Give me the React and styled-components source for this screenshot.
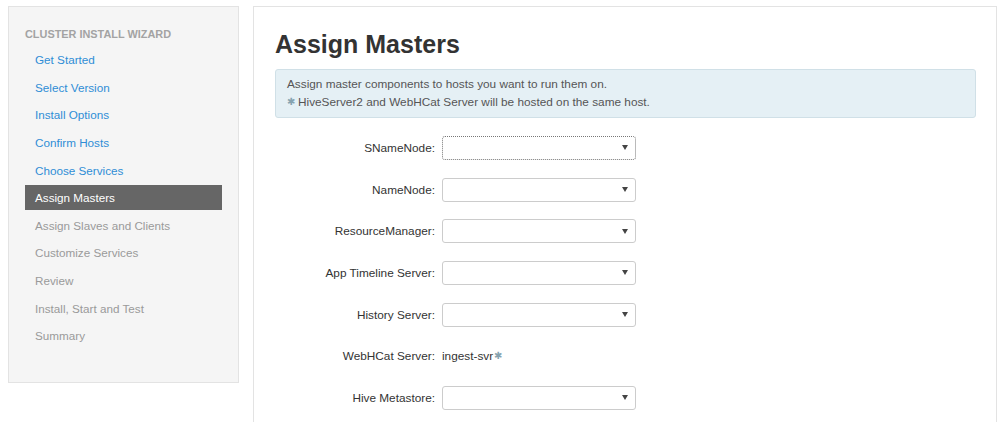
import styled, { createGlobalStyle } from "styled-components";

const Global = createGlobalStyle`
  html, body {
    margin: 0;
    background: #fff;
    font-family: "Liberation Sans", Arial, sans-serif;
    overflow: hidden;
  }
  body {
    padding: 6px 0 0 8px;
  }
`;

const Page = styled.div`
  display: flex;
  align-items: flex-start;
  gap: 14px;
  height: 416px;
`;

const Sidebar = styled.div`
  width: 231px;
  background: #f5f5f5;
  border: 1px solid #e3e3e3;
  padding: 20px 16px 34px 16px;
  box-sizing: border-box;
`;

const SideTitle = styled.div`
  font-size: 10.9px;
  font-weight: bold;
  color: #a3a3a3;
  text-transform: uppercase;
  line-height: 14px;
  margin-bottom: 6px;
`;

const NavList = styled.ul`
  list-style: none;
  margin: 0;
  padding: 0;
  display: flex;
  flex-direction: column;
  gap: 2.65px;
`;

const NavItem = styled.li`
  height: 25px;
  line-height: 25px;
  padding-left: 10px;
  font-size: 11.7px;
  color: ${(p) => (p.$state === "done" ? "#2f8dd5" : p.$state === "active" ? "#fff" : "#9a9a9a")};
  background: ${(p) => (p.$state === "active" ? "#666" : "transparent")};
  white-space: nowrap;
`;

const Main = styled.div`
  flex: 1;
  margin-right: 2px;
  height: 420px;
  background: #fff;
  border: 1px solid #e3e3e3;
  border-bottom: none;
  padding: 0 20px 0 21px;
  box-sizing: border-box;
`;

const Title = styled.h1`
  margin: 23px 0 11px 0;
  font-size: 25px;
  line-height: 28px;
  font-weight: bold;
  color: #333;
`;

const Alert = styled.div`
  background: #e5f0f5;
  border: 1px solid #d0e0e7;
  border-radius: 3px;
  padding: 6px 11px 6px 11px;
  font-size: 11.8px;
  line-height: 17px;
  color: #555;
`;

const Star = styled.span`
  color: #86a3b0;
  font-size: 10px;
  margin-right: 3px;
  vertical-align: 1px;
`;

const Form = styled.div`
  margin-top: 9px;
  display: flex;
  flex-direction: column;
`;

const Row = styled.div`
  display: flex;
  align-items: center;
  height: 41.7px;
  gap: 7px;
`;

const Label = styled.div`
  width: 160px;
  text-align: right;
  font-size: 11.8px;
  color: #333;
`;

const Select = styled.div`
  width: 194px;
  height: 24px;
  box-sizing: border-box;
  border: 1px ${(p) => (p.$focus ? "dotted #777" : "solid #ccc")};
  border-radius: 3px;
  background: #fff;
  display: flex;
  align-items: center;
  justify-content: flex-end;
  padding-right: 7px;
`;

const Caret = styled.span`
  width: 0;
  height: 0;
  border-left: 3px solid transparent;
  border-right: 3px solid transparent;
  border-top: 5px solid #444;
`;

const Value = styled.div`
  font-size: 11.8px;
  color: #333;
`;

const steps = [
  ["Get Started", "done"],
  ["Select Version", "done"],
  ["Install Options", "done"],
  ["Confirm Hosts", "done"],
  ["Choose Services", "done"],
  ["Assign Masters", "active"],
  ["Assign Slaves and Clients", "todo"],
  ["Customize Services", "todo"],
  ["Review", "todo"],
  ["Install, Start and Test", "todo"],
  ["Summary", "todo"],
];

const rows = [
  { label: "SNameNode:", focus: true },
  { label: "NameNode:" },
  { label: "ResourceManager:" },
  { label: "App Timeline Server:" },
  { label: "History Server:" },
  { label: "WebHCat Server:", value: "ingest-svr" },
  { label: "Hive Metastore:" },
];

export default function App() {
  return (
    <>
      <Global />
      <Page>
        <Sidebar>
          <SideTitle>Cluster Install Wizard</SideTitle>
          <NavList>
            {steps.map(([name, state]) => (
              <NavItem key={name} $state={state}>
                {name}
              </NavItem>
            ))}
          </NavList>
        </Sidebar>
        <Main>
          <Title>Assign Masters</Title>
          <Alert>
            <div>Assign master components to hosts you want to run them on.</div>
            <div>
              <Star>✱</Star>HiveServer2 and WebHCat Server will be hosted on the same host.
            </div>
          </Alert>
          <Form>
            {rows.map((r) => (
              <Row key={r.label}>
                <Label>{r.label}</Label>
                {r.value ? (
                  <Value>
                    {r.value}
                    <Star style={{ marginLeft: 1 }}>✱</Star>
                  </Value>
                ) : (
                  <Select $focus={r.focus}>
                    <Caret />
                  </Select>
                )}
              </Row>
            ))}
          </Form>
        </Main>
      </Page>
    </>
  );
}
